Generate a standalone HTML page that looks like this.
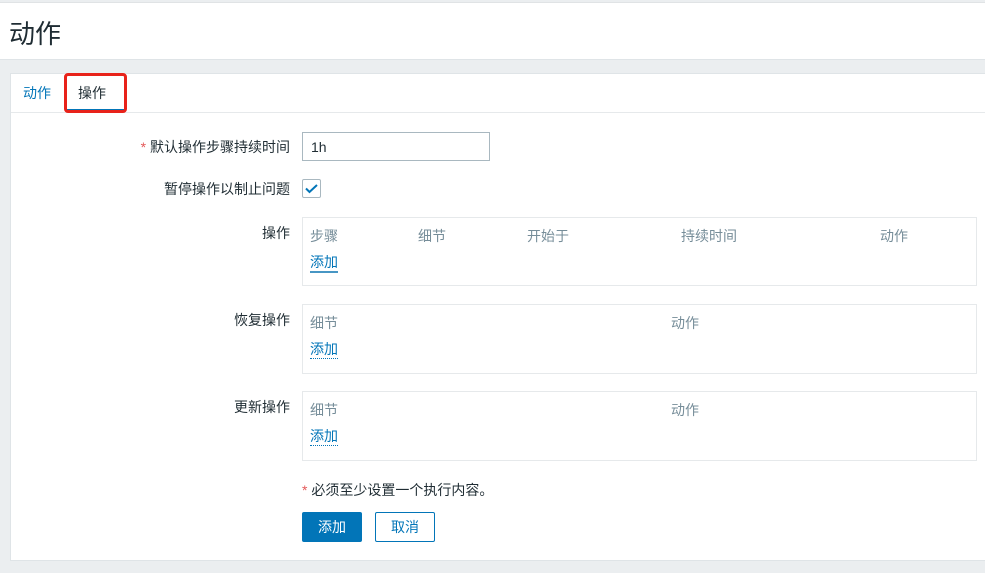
<!DOCTYPE html>
<html><head><meta charset="utf-8"><style>
*{box-sizing:border-box;margin:0;padding:0}
body{width:985px;height:573px;background:#ebeef0;font-family:"Liberation Sans","Noto Sans CJK SC",sans-serif;font-size:14px;color:#1f2c33;position:relative;overflow:hidden}
.a{position:absolute}
.top{left:0;top:2px;width:985px;height:58px;background:#fff;border-top:1px solid #e0e3e5;border-bottom:1px solid #dfe4e7}
.panel{left:10px;top:73px;width:985px;height:488px;background:#fff;border:1px solid #dfe4e7}
.lbl{right:695px;text-align:right;white-space:nowrap}
.box{left:302px;width:675px;border:1px solid #e6e9eb;background:#fff}
.h{color:#768d99;white-space:nowrap}
.lnk{color:#0275b8;border-bottom:1px dotted #0275b8;line-height:17px}
</style></head><body>
<div class="a top"></div>
<div class="a" style="left:9px;top:14px;font-size:26px;color:#1f2c33">动作</div>
<div class="a panel"></div>
<div class="a" style="left:11px;top:112px;width:974px;border-top:1px solid #e6e9eb"></div>
<div class="a" style="left:23px;top:83px;color:#0275b8">动作</div>
<div class="a" style="left:66px;top:109px;width:58px;height:3px;background:#0275b8"></div>
<div class="a" style="left:64px;top:73px;width:63px;height:40px;border:3px solid #e8221a;border-radius:4px"></div>
<div class="a" style="left:78px;top:83px">操作</div>

<div class="a lbl" style="top:137px"><span style="color:#e45959">*</span> 默认操作步骤持续时间</div>
<div class="a" style="left:302px;top:132px;width:188px;height:29px;border:1px solid #a9b8c0;padding:6px 8px">1h</div>
<div class="a lbl" style="top:179px">暂停操作以制止问题</div>
<div class="a" style="left:302px;top:179px;width:19px;height:19px;border:1px solid #a9b8c0;border-radius:2px">
<svg width="17" height="17" viewBox="0 0 17 17"><path d="M3 8.5l3.5 3.5L14 5" stroke="#0275b8" stroke-width="2" fill="none"/></svg></div>

<div class="a lbl" style="top:223px">操作</div>
<div class="a box" style="top:217px;height:69px"></div>
<div class="a h" style="left:310px;top:226px">步骤</div>
<div class="a h" style="left:418px;top:226px">细节</div>
<div class="a h" style="left:527px;top:226px">开始于</div>
<div class="a h" style="left:681px;top:226px">持续时间</div>
<div class="a h" style="left:880px;top:226px">动作</div>
<div class="a lnk" style="left:310px;top:254px;border-bottom:2px solid #4796c4">添加</div>

<div class="a lbl" style="top:310px">恢复操作</div>
<div class="a box" style="top:304px;height:70px"></div>
<div class="a h" style="left:310px;top:313px">细节</div>
<div class="a h" style="left:671px;top:313px">动作</div>
<div class="a lnk" style="left:310px;top:341px">添加</div>

<div class="a lbl" style="top:397px">更新操作</div>
<div class="a box" style="top:391px;height:70px"></div>
<div class="a h" style="left:310px;top:400px">细节</div>
<div class="a h" style="left:671px;top:400px">动作</div>
<div class="a lnk" style="left:310px;top:428px">添加</div>

<div class="a" style="left:302px;top:480px;white-space:nowrap"><span style="color:#e45959">*</span> 必须至少设置一个执行内容。</div>
<div class="a" style="left:302px;top:512px;width:60px;height:30px;background:#0275b8;color:#fff;border-radius:2px;text-align:center;line-height:30px">添加</div>
<div class="a" style="left:375px;top:512px;width:60px;height:30px;border:1px solid #0275b8;color:#0275b8;border-radius:2px;text-align:center;line-height:28px">取消</div>
</body></html>
